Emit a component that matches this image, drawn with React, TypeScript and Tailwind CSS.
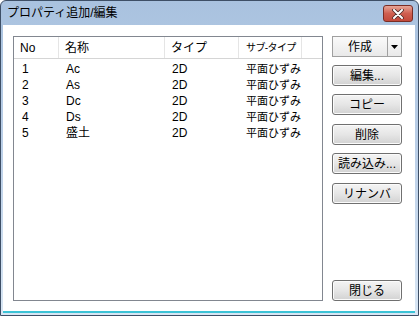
import React from "react";

const font = { fontFamily: '"Liberation Sans", "Noto Sans CJK JP", sans-serif' };

function Btn({ label, className = "" }: { label: string; className?: string }) {
  return (
    <div
      className={
        "h-[21px] w-[70px] rounded-[3px] border border-[#707070] bg-gradient-to-b from-[#f4f4f4] via-[#e6e6e6] to-[#d2d2d2] flex items-center justify-center text-[12px] text-black leading-none shadow-[inset_0_0_0_1px_#fbfbfb] " +
        className
      }
    >
      {label}
    </div>
  );
}

const rows = [
  ["1", "Ac", "2D", "平面ひずみ"],
  ["2", "As", "2D", "平面ひずみ"],
  ["3", "Dc", "2D", "平面ひずみ"],
  ["4", "Ds", "2D", "平面ひずみ"],
  ["5", "盛土", "2D", "平面ひずみ"],
];

export default function App() {
  return (
    <div className="w-[419px] h-[316px] bg-white" style={font}>
      <div className="w-[419px] h-[316px] flex flex-col rounded-t-[6px] border border-[#3e4f66] bg-gradient-to-b from-[#a9c2df] via-[#bcd0e8] to-[#d8e6f4] overflow-hidden">
        {/* title bar */}
        <div className="h-[24px] flex items-center relative shrink-0">
          <span className="ml-[6px] text-[12px] text-black leading-none">プロパティ追加/編集</span>
          <div className="absolute left-[382px] top-[4px] w-[30px] h-[17px] rounded-[3px] border border-[#7a2d25] bg-gradient-to-b from-[#e6a597] via-[#cf5f50] to-[#c2493b] flex items-center justify-center">
            <svg width="12" height="10" viewBox="0 0 12 10">
              <path d="M2 1 L10 9 M10 1 L2 9" stroke="#4a2a28" strokeWidth="3.6" strokeLinecap="round" />
              <path d="M2 1 L10 9 M10 1 L2 9" stroke="#ffffff" strokeWidth="2" strokeLinecap="round" />
            </svg>
          </div>
        </div>
        {/* body */}
        <div className="flex-1 ml-[2px] mr-[3px] mb-[2px] bg-white border-b-2 border-[#3cc3d6] flex pl-[10px] pt-[11px] pb-[10px]">
          {/* list */}
          <div className="w-[310px] border border-[#828790] bg-white text-[12px] text-black">
            <div className="h-[22px] flex border-b border-[#d5d5d5]">
              <div className="w-[45px] border-r border-[#e5e5e5] flex items-center pl-[6px]">No</div>
              <div className="w-[106px] border-r border-[#e5e5e5] flex items-center pl-[6px]">名称</div>
              <div className="w-[74px] border-r border-[#e5e5e5] flex items-center pl-[6px]">タイプ</div>
              <div className="w-[63px] border-r border-[#e5e5e5] flex items-center pl-[7px] text-[10px] tracking-[-0.6px] whitespace-nowrap">サブ-タイプ</div>
              <div className="flex-1" />
            </div>
            <div className="pt-[2px]">
              {rows.map((r) => (
                <div key={r[0]} className="h-[16px] flex items-center leading-none whitespace-nowrap">
                  <div className="w-[45px] pl-[8px]">{r[0]}</div>
                  <div className="w-[106px] pl-[7px]">{r[1]}</div>
                  <div className="w-[74px] pl-[7px]">{r[2]}</div>
                  <div className="pl-[7px] text-[11px]">{r[3]}</div>
                </div>
              ))}
            </div>
          </div>
          {/* buttons */}
          <div className="ml-[9px] w-[70px] flex flex-col">
            <div className="h-[21px] w-[70px] border border-[#a0a0a0] bg-gradient-to-b from-[#fafafa] to-[#e9e9e9] flex text-[12px] leading-none">
              <div className="flex-1 flex items-center justify-center border-r border-[#a0a0a0]">作成</div>
              <div className="w-[13px] flex items-center justify-center">
                <svg width="7" height="4" viewBox="0 0 7 4">
                  <path d="M0 0 L7 0 L3.5 4 Z" fill="#000" />
                </svg>
              </div>
            </div>
            <Btn label="編集..." className="mt-[8px]" />
            <Btn label="コピー" className="mt-[8px]" />
            <Btn label="削除" className="mt-[9px]" />
            <Btn label="読み込み..." className="mt-[8px]" />
            <Btn label="リナンバ" className="mt-[9px]" />
            <Btn label="閉じる" className="mt-auto" />
          </div>
        </div>
      </div>
    </div>
  );
}
